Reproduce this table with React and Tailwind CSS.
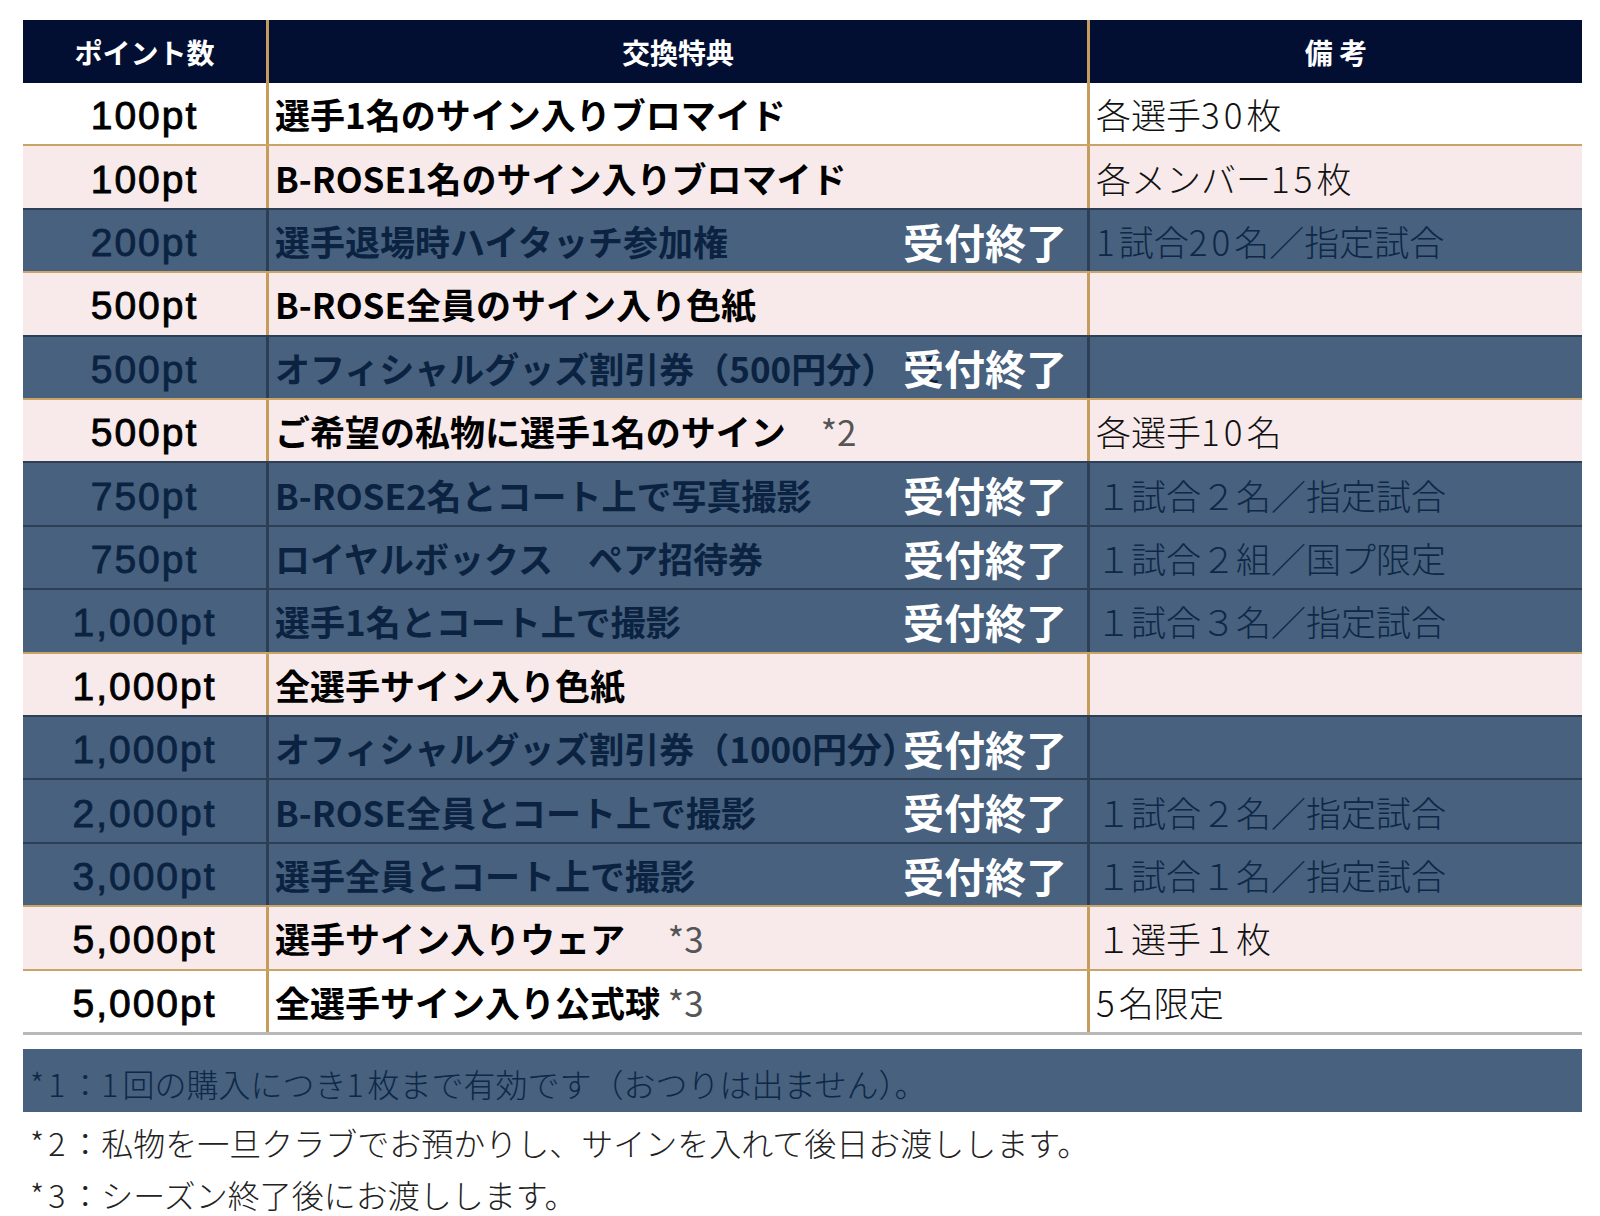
import React from "react";

const JP = { fontFamily: '"Noto Sans CJK JP", "Noto Sans", sans-serif' };
const NUM = { fontFamily: '"Liberation Sans", Arial, "Noto Sans CJK JP", sans-serif' };

const rows = [
  { pt: "100pt", item: "選手1名のサイン入りブロマイド", note: "各選手30枚", type: "white" },
  { pt: "100pt", item: "B-ROSE1名のサイン入りブロマイド", note: "各メンバー15枚", type: "pink" },
  { pt: "200pt", item: "選手退場時ハイタッチ参加権", note: "1試合20名／指定試合", type: "blue" },
  { pt: "500pt", item: "B-ROSE全員のサイン入り色紙", note: "", type: "pink" },
  { pt: "500pt", item: "オフィシャルグッズ割引券（500円分）", suffix: " *1", note: "", type: "blue" },
  { pt: "500pt", item: "ご希望の私物に選手1名のサイン", suffix: "　*2", note: "各選手10名", type: "pink" },
  { pt: "750pt", item: "B-ROSE2名とコート上で写真撮影", note: "１試合２名／指定試合", type: "blue" },
  { pt: "750pt", item: "ロイヤルボックス　ペア招待券", note: "１試合２組／国プ限定", type: "blue" },
  { pt: "1,000pt", item: "選手1名とコート上で撮影", note: "１試合３名／指定試合", type: "blue" },
  { pt: "1,000pt", item: "全選手サイン入り色紙", note: "", type: "pink" },
  { pt: "1,000pt", item: "オフィシャルグッズ割引券（1000円分）", note: "", type: "blue" },
  { pt: "2,000pt", item: "B-ROSE全員とコート上で撮影", note: "１試合２名／指定試合", type: "blue" },
  { pt: "3,000pt", item: "選手全員とコート上で撮影", note: "１試合１名／指定試合", type: "blue" },
  { pt: "5,000pt", item: "選手サイン入りウェア", suffix: "　 *3", note: "１選手１枚", type: "pink" },
  { pt: "5,000pt", item: "全選手サイン入り公式球", suffix: " *3", note: "5名限定", type: "white" },
];

function Digits({ text }) {
  const parts = text.split(/([0-9*]+)/);
  return parts.map((p, i) =>
    /^[0-9*]+$/.test(p) ? (
      <span key={i} className="tracking-[4px]">
        {p}
      </span>
    ) : (
      <span key={i}>{p}</span>
    )
  );
}

function Row({ r, first }) {
  const blue = r.type === "blue";
  const bg = blue ? "bg-[#47617f]" : r.type === "pink" ? "bg-[#f8eaea]" : "bg-white";
  const top = first ? "" : blue ? "border-t-2 border-[#2d3f55]" : "border-t-2 border-[#c9a466]";
  const divider = blue ? "border-[#2d3f55]" : "border-[#c59c5c]";
  const ink = blue ? "text-[#0b2341]" : "text-black";
  return (
    <div className={`flex flex-1 min-h-0 ${bg} ${top}`}>
      <div
        className={`w-[243px] shrink-0 flex items-center justify-center pt-[4px] text-[39px] leading-none tracking-[2px] [-webkit-text-stroke:0.9px] ${ink}`}
        style={NUM}
      >
        {r.pt}
      </div>
      <div className={`relative w-[821px] shrink-0 border-l-[3px] ${divider} flex items-center pl-[6px] overflow-hidden`}>
        <span className={`text-[35px] leading-none font-bold whitespace-nowrap ${ink}`} style={JP}>
          {r.item}
          {r.suffix && (
            <span className={`font-normal ${blue ? "text-[#0b2341]" : "text-[#555555]"}`}>{r.suffix}</span>
          )}
        </span>
        {blue && (
          <span
            className="absolute right-[20px] top-1/2 -translate-y-1/2 text-[41px] leading-none font-bold text-white whitespace-nowrap"
            style={JP}
          >
            受付終了
          </span>
        )}
      </div>
      <div className={`flex-1 border-l-[3px] ${divider} flex items-center pl-[6px]`}>
        <span
          className={`text-[35px] leading-none font-light whitespace-nowrap ${blue ? "text-[#0e2846]" : "text-[#111111]"}`}
          style={JP}
        >
          <Digits text={r.note} />
        </span>
      </div>
    </div>
  );
}

export default function App() {
  return (
    <div className="w-[1600px] h-[1216px] bg-white overflow-hidden">
      <div className="ml-[23px] mt-[20px] w-[1559px]">
        <div className="flex h-[63px] bg-[#020f33] text-white" style={JP}>
          <div className="w-[243px] shrink-0 flex items-center justify-center text-[28px] font-bold leading-none">
            ポイント数
          </div>
          <div className="w-[821px] shrink-0 border-l-[3px] border-[#c59c5c] flex items-center justify-center text-[28px] font-bold leading-none">
            交換特典
          </div>
          <div className="flex-1 border-l-[3px] border-[#c59c5c] flex items-center justify-center text-[28px] font-bold leading-none">
            備 考
          </div>
        </div>
        <div className="flex flex-col h-[949px]">
          {rows.map((r, i) => (
            <Row key={i} r={r} first={i === 0} />
          ))}
        </div>
        <div className="h-[3px] bg-[#b8b8b8]" />
        <div className="mt-[14px] h-[63px] bg-[#47617f] pt-[18px] pl-[7px]">
          <p className="text-[32px] leading-none font-light text-[#0e2846] whitespace-nowrap" style={JP}>
            <Digits text="*1：1回の購入につき1枚まで有効です（おつりは出ません）。" />
          </p>
        </div>
        <p className="mt-[14px] pl-[7px] text-[32px] leading-none font-light text-[#222222] whitespace-nowrap" style={JP}>
          <Digits text="*2：私物を一旦クラブでお預かりし、サインを入れて後日お渡しします。" />
        </p>
        <p className="mt-[20px] pl-[7px] text-[32px] leading-none font-light text-[#222222] whitespace-nowrap" style={JP}>
          <Digits text="*3：シーズン終了後にお渡しします。" />
        </p>
      </div>
    </div>
  );
}
